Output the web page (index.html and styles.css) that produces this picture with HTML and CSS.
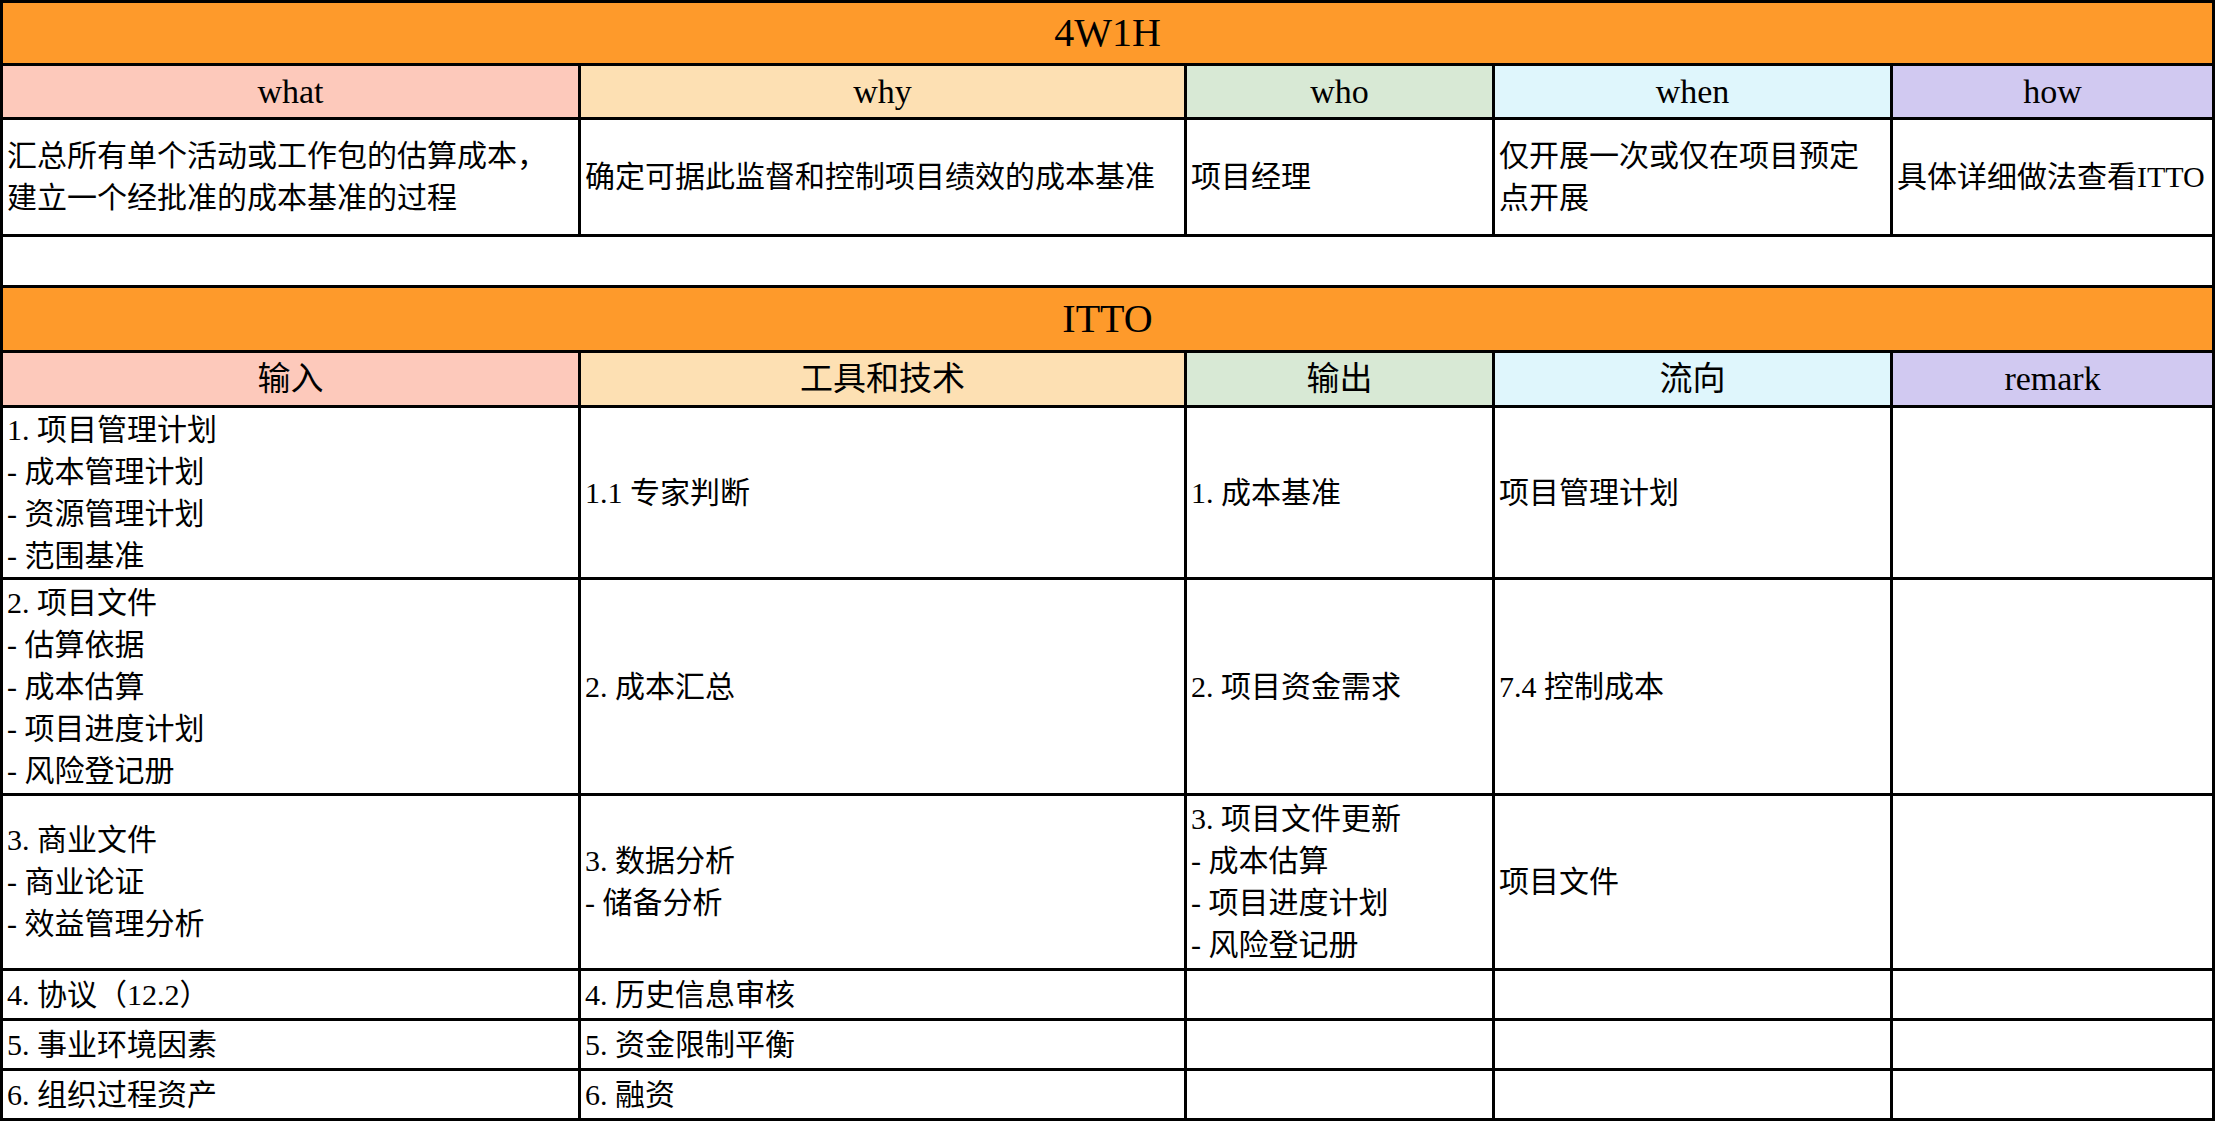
FILE: index.html
```html
<!DOCTYPE html>
<html lang="zh-CN">
<head>
<meta charset="utf-8">
<title>4W1H / ITTO</title>
<link rel="stylesheet" href="styles.css">
</head>
<body>
<table class="sheet">
  <colgroup>
    <col class="c1"><col class="c2"><col class="c3"><col class="c4"><col class="c5">
  </colgroup>
  <tbody>
    <tr class="r-title"><td colspan="5" class="title">4W1H</td></tr>
    <tr class="r-head">
      <td class="head pink">what</td>
      <td class="head peach">why</td>
      <td class="head green">who</td>
      <td class="head cyan">when</td>
      <td class="head violet">how</td>
    </tr>
    <tr class="r-desc">
      <td class="cell">汇总所有单个活动或工作包的估算成本，<br>建立一个经批准的成本基准的过程</td>
      <td class="cell">确定可据此监督和控制项目绩效的成本基准</td>
      <td class="cell">项目经理</td>
      <td class="cell">仅开展一次或仅在项目预定<br>点开展</td>
      <td class="cell">具体详细做法查看ITTO</td>
    </tr>
    <tr class="r-blank"><td colspan="5" class="cell"></td></tr>
    <tr class="r-title2"><td colspan="5" class="title">ITTO</td></tr>
    <tr class="r-head2">
      <td class="head cjk pink">输入</td>
      <td class="head cjk peach">工具和技术</td>
      <td class="head cjk green">输出</td>
      <td class="head cjk cyan">流向</td>
      <td class="head violet">remark</td>
    </tr>
    <tr class="r1">
      <td class="cell">1. 项目管理计划<br>- 成本管理计划<br>- 资源管理计划<br>- 范围基准</td>
      <td class="cell">1.1 专家判断</td>
      <td class="cell">1. 成本基准</td>
      <td class="cell">项目管理计划</td>
      <td class="cell"></td>
    </tr>
    <tr class="r2">
      <td class="cell">2. 项目文件<br>- 估算依据<br>- 成本估算<br>- 项目进度计划<br>- 风险登记册</td>
      <td class="cell">2. 成本汇总</td>
      <td class="cell">2. 项目资金需求</td>
      <td class="cell">7.4 控制成本</td>
      <td class="cell"></td>
    </tr>
    <tr class="r3">
      <td class="cell">3. 商业文件<br>- 商业论证<br>- 效益管理分析</td>
      <td class="cell">3. 数据分析<br>- 储备分析</td>
      <td class="cell">3. 项目文件更新<br>- 成本估算<br>- 项目进度计划<br>- 风险登记册</td>
      <td class="cell">项目文件</td>
      <td class="cell"></td>
    </tr>
    <tr class="r-small">
      <td class="cell">4. 协议（12.2）</td>
      <td class="cell">4. 历史信息审核</td>
      <td class="cell"></td>
      <td class="cell"></td>
      <td class="cell"></td>
    </tr>
    <tr class="r-small">
      <td class="cell">5. 事业环境因素</td>
      <td class="cell">5. 资金限制平衡</td>
      <td class="cell"></td>
      <td class="cell"></td>
      <td class="cell"></td>
    </tr>
    <tr class="r-last">
      <td class="cell">6. 组织过程资产</td>
      <td class="cell">6. 融资</td>
      <td class="cell"></td>
      <td class="cell"></td>
      <td class="cell"></td>
    </tr>
  </tbody>
</table>
</body>
</html>
```

FILE: styles.css
```css
html, body {
  margin: 0;
  padding: 0;
  background: #ffffff;
}

body {
  font-family: "Liberation Serif", "Noto Sans CJK SC", serif;
  color: #000000;
}

.sheet {
  width: 2212px;
  border-collapse: collapse;
  table-layout: fixed;
}

.c1 { width: 578px; }
.c2 { width: 606px; }
.c3 { width: 308px; }
.c4 { width: 398px; }
.c5 { width: 322px; }

.sheet td {
  border: 3px solid #000000;
  padding: 0 4px;
  vertical-align: middle;
}

.r-title { height: 63px; }
.r-head { height: 54px; }
.r-desc { height: 117px; }
.r-blank { height: 51px; }
.r-title2 { height: 65px; }
.r-head2 { height: 55px; }
.r1 { height: 172px; }
.r2 { height: 216px; }
.r3 { height: 175px; }
.r-small { height: 50px; }
.r-last { height: 50px; }

.title {
  background: #fe9a2b;
  text-align: center;
  font-size: 40px;
  line-height: 44px;
}

.head {
  text-align: center;
  font-size: 34px;
  line-height: 40px;
}

.head.cjk {
  font-size: 33px;
}

.pink { background: #fdc9bb; }
.peach { background: #fde0b3; }
.green { background: #d8e9d5; }
.cyan { background: #dff6fc; }
.violet { background: #d1c9f1; }

.cell {
  font-size: 30px;
  line-height: 42px;
  text-align: left;
  white-space: nowrap;
}
```
